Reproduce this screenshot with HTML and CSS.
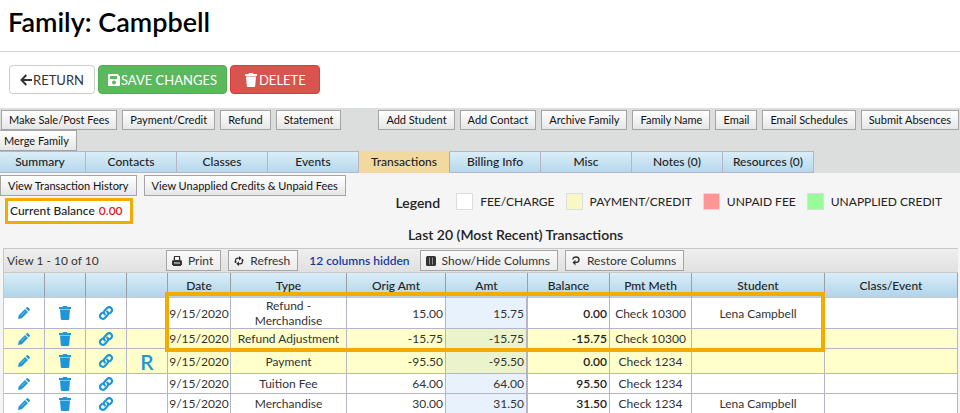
FILE: index.html
```
<!DOCTYPE html>
<html lang="en">
<head>
    <meta charset="UTF-8">
    <meta name="viewport" content="width=device-width, initial-scale=1.0">
    <title>Family: Campbell</title>
    <link rel="stylesheet" href="styles.css">
</head>
<body>
    <!-- Icon definitions -->
    <svg class="icon-defs" aria-hidden="true">
        <symbol id="arrow" viewBox="0 0 12 12"><path d="M6.3 1 1.5 6l4.8 5M1.7 6H12" fill="none" stroke="currentColor" stroke-width="2"/></symbol>
        <symbol id="save" viewBox="0 0 12 12"><path fill-rule="evenodd" d="M1 0h8.500L12 2.500V11q0 1-1 1H1q-1 0-1-1V1q0-1 1-1zM2 2v3h7V2zM6 6.500a2 2 0 1 0 .01 0z" fill="currentColor"/></symbol>
        <symbol id="trash" viewBox="0 0 12 14"><path d="M0 1h3.500L4.200 0h3.600l.7 1H12v2H0zM1 3.500h10l-.8 9.500q-.1 1-1.100 1H2.900q-1 0-1.100-1z" fill="currentColor"/></symbol>
        <symbol id="pencil" viewBox="0 0 12 12"><path d="M0 12l.8-3.800L7 2l3 3-6.200 6.200zM7.700 1.300 8.600.4q.8-.7 1.600 0l1.400 1.400q.7.8 0 1.600l-.9.900z" fill="currentColor"/><path d="M3 8.500 7.300 4.200" stroke="#fff" stroke-width=".6" opacity=".7"/></symbol>
        <symbol id="link" viewBox="0 0 14 14"><g fill="none" stroke="currentColor" stroke-width="2.200" stroke-linecap="round"><path d="M5.800 8.400A2.800 2.800 0 0 1 5.800 4.500L8.200 2A2.700 2.700 0 0 1 12.200 5.900L10.800 7.300"/><path d="M8.200 5.600A2.800 2.800 0 0 1 8.200 9.500L5.800 12A2.700 2.700 0 0 1 1.800 8.100L3.200 6.700"/></g></symbol>
        <symbol id="print" viewBox="0 0 10 10"><path fill-rule="evenodd" d="M2 0h6l.5 4.500H10V9H9v1H1V9H0V4.500h1.500zM3 1v3h4V1zM2 6.500v1h6v-1z" fill="currentColor"/></symbol>
        <symbol id="refresh" viewBox="0 0 10 10"><g fill="none" stroke="currentColor" stroke-width="1.200"><path d="M1.500 6.500V4.500Q1.500 2.200 4 2.200h2M8.500 3.500v2Q8.500 7.800 6 7.800H4"/></g><path d="M5 0 7.800 2.200 5 4.400zM5 5.600 2.200 7.800 5 10zM0 5.500h3L1.500 7.300zM7 4.500h3L8.500 2.700z" fill="currentColor"/></symbol>
        <symbol id="columns" viewBox="0 0 10 10"><path fill-rule="evenodd" d="M1.500 0h7Q10 0 10 1.500v7Q10 10 8.500 10h-7Q0 10 0 8.500v-7Q0 0 1.500 0zM3 1.500v7h.5v-7zM6.500 1.500v7H7v-7z" fill="currentColor"/></symbol>
        <symbol id="restore" viewBox="0 0 10 10"><path d="M2 3.500Q2 1 5 1t3 2.700Q8 6.400 5 6.400H2.500" fill="none" stroke="currentColor" stroke-width="1.400"/><path d="M4.500 3.800 1.500 6.500l3 3z" fill="currentColor"/></symbol>
    </svg>

    <header class="page-header">
        <h1>Family: Campbell</h1>
    </header>

    <div class="main-actions">
        <button class="btn btn-return"><svg class="icon-12"><use href="#arrow"/></svg>RETURN</button>
        <button class="btn btn-save"><svg class="icon-12"><use href="#save"/></svg>SAVE CHANGES</button>
        <button class="btn btn-delete"><svg class="icon-14"><use href="#trash"/></svg>DELETE</button>
    </div>

    <div class="top-panel">
        <div class="tool-row">
            <button class="tool">Make Sale/Post Fees</button>
            <button class="tool">Payment/Credit</button>
            <button class="tool">Refund</button>
            <button class="tool">Statement</button>
            <button class="tool push-right">Add Student</button>
            <button class="tool">Add Contact</button>
            <button class="tool">Archive Family</button>
            <button class="tool">Family Name</button>
            <button class="tool">Email</button>
            <button class="tool">Email Schedules</button>
            <button class="tool">Submit Absences</button>
        </div>
        <div class="tool-row merge-row">
            <button class="tool">Merge Family</button>
        </div>
        <nav class="tabs">
            <a href="#">Summary</a>
            <a href="#">Contacts</a>
            <a href="#">Classes</a>
            <a href="#">Events</a>
            <a href="#" class="active">Transactions</a>
            <a href="#">Billing Info</a>
            <a href="#">Misc</a>
            <a href="#">Notes (0)</a>
            <a href="#">Resources (0)</a>
        </nav>
    </div>

    <main class="content">
        <div class="view-row">
            <button class="tool">View Transaction History</button>
            <button class="tool">View Unapplied Credits &amp; Unpaid Fees</button>
        </div>

        <div class="info-row">
            <div class="balance">Current Balance <span>0.00</span></div>
            <div class="legend">
                <strong>Legend</strong>
                <span class="legend-item"><i class="swatch fee"></i>FEE/CHARGE</span>
                <span class="legend-item"><i class="swatch payment"></i>PAYMENT/CREDIT</span>
                <span class="legend-item"><i class="swatch unpaid"></i>UNPAID FEE</span>
                <span class="legend-item"><i class="swatch unapplied"></i>UNAPPLIED CREDIT</span>
            </div>
        </div>

        <h2>Last 20 (Most Recent) Transactions</h2>

        <div class="grid">
            <div class="grid-bar">
                <span class="view-count">View 1 - 10 of 10</span>
                <button class="grid-btn"><svg><use href="#print"/></svg>Print</button>
                <button class="grid-btn"><svg><use href="#refresh"/></svg>Refresh</button>
                <span class="hidden-note">12 columns hidden</span>
                <button class="grid-btn"><svg><use href="#columns"/></svg>Show/Hide Columns</button>
                <button class="grid-btn"><svg><use href="#restore"/></svg>Restore Columns</button>
            </div>
            <div class="table-wrap">
                <table>
                    <colgroup>
                        <col class="c-icon"><col class="c-icon"><col class="c-icon"><col class="c-icon">
                        <col class="c-date"><col class="c-type"><col class="c-orig"><col class="c-amt">
                        <col class="c-amt"><col class="c-amt"><col class="c-name"><col class="c-name">
                    </colgroup>
                    <thead>
                        <tr>
                            <th></th><th></th><th></th><th></th>
                            <th>Date</th><th>Type</th><th>Orig Amt</th><th>Amt</th>
                            <th>Balance</th><th>Pmt Meth</th><th>Student</th><th>Class/Event</th>
                        </tr>
                    </thead>
                    <tbody>
                        <tr class="tall">
                            <td><button class="act" aria-label="Edit"><svg class="icon-12"><use href="#pencil"/></svg></button></td>
                            <td><button class="act" aria-label="Delete"><svg class="icon-14"><use href="#trash"/></svg></button></td>
                            <td><button class="act" aria-label="Link"><svg class="icon-14"><use href="#link"/></svg></button></td>
                            <td></td>
                            <td>9/15/2020</td><td>Refund -<br>Merchandise</td><td class="num">15.00</td><td class="num amt">15.75</td>
                            <td class="num bal">0.00</td><td>Check 10300</td><td>Lena Campbell</td><td></td>
                        </tr>
                        <tr class="credit">
                            <td><button class="act" aria-label="Edit"><svg class="icon-12"><use href="#pencil"/></svg></button></td>
                            <td><button class="act" aria-label="Delete"><svg class="icon-14"><use href="#trash"/></svg></button></td>
                            <td><button class="act" aria-label="Link"><svg class="icon-14"><use href="#link"/></svg></button></td>
                            <td></td>
                            <td>9/15/2020</td><td>Refund Adjustment</td><td class="num">-15.75</td><td class="num amt">-15.75</td>
                            <td class="num bal">-15.75</td><td>Check 10300</td><td></td><td></td>
                        </tr>
                        <tr class="credit medium">
                            <td><button class="act" aria-label="Edit"><svg class="icon-12"><use href="#pencil"/></svg></button></td>
                            <td><button class="act" aria-label="Delete"><svg class="icon-14"><use href="#trash"/></svg></button></td>
                            <td><button class="act" aria-label="Link"><svg class="icon-14"><use href="#link"/></svg></button></td>
                            <td class="receipt">R</td>
                            <td>9/15/2020</td><td>Payment</td><td class="num">-95.50</td><td class="num amt">-95.50</td>
                            <td class="num bal">0.00</td><td>Check 1234</td><td></td><td></td>
                        </tr>
                        <tr>
                            <td><button class="act" aria-label="Edit"><svg class="icon-12"><use href="#pencil"/></svg></button></td>
                            <td><button class="act" aria-label="Delete"><svg class="icon-14"><use href="#trash"/></svg></button></td>
                            <td><button class="act" aria-label="Link"><svg class="icon-14"><use href="#link"/></svg></button></td>
                            <td></td>
                            <td>9/15/2020</td><td>Tuition Fee</td><td class="num">64.00</td><td class="num amt">64.00</td>
                            <td class="num bal">95.50</td><td>Check 1234</td><td></td><td></td>
                        </tr>
                        <tr>
                            <td><button class="act" aria-label="Edit"><svg class="icon-12"><use href="#pencil"/></svg></button></td>
                            <td><button class="act" aria-label="Delete"><svg class="icon-14"><use href="#trash"/></svg></button></td>
                            <td><button class="act" aria-label="Link"><svg class="icon-14"><use href="#link"/></svg></button></td>
                            <td></td>
                            <td>9/15/2020</td><td>Merchandise</td><td class="num">30.00</td><td class="num amt">31.50</td>
                            <td class="num bal">31.50</td><td>Check 1234</td><td>Lena Campbell</td><td></td>
                        </tr>
                    </tbody>
                </table>
                <div class="highlight"></div>
            </div>
        </div>
    </main>
</body>
</html>
```

FILE: styles.css
```
* {
    box-sizing: border-box;
}

body {
    margin: 0;
    font-family: Lato, "Liberation Sans", sans-serif;
    font-size: 12px;
    color: #222;
    background: #fff;
    overflow: hidden;
}

button {
    font-family: inherit;
    cursor: pointer;
}

.icon-defs {
    display: none;
}

.icon-12 {
    width: 12px;
    height: 12px;
}

.icon-14 {
    width: 14px;
    height: 14px;
}

/* Header */
.page-header {
    padding: 5px 8px 12px;
    border-bottom: 1px solid #d4d4d4;
}

h1 {
    margin: 0;
    font-size: 27px;
    line-height: 34px;
    font-weight: 600;
    color: #000;
}

.main-actions {
    display: flex;
    gap: 3px;
    padding: 13px 9px 14px;
}

.btn {
    display: flex;
    align-items: center;
    height: 29px;
    padding: 0 10px;
    font-size: 13px;
    color: #fff;
    border: 1px solid;
    border-radius: 4px;
}

.btn svg {
    margin-right: 1px;
}

.btn-return {
    color: #333;
    background: #fff;
    border-color: #ccc;
}

.btn-save {
    padding: 0 9px;
    background: #5cb85c;
    border-color: #4cae4c;
}

.btn-delete {
    padding: 0 13px;
    background: #d9534f;
    border-color: #d43f3a;
}

/* Toolbar and tabs */
.top-panel {
    background: #dcdedd;
}

.tool-row {
    display: flex;
    gap: 5px;
    padding: 2px 1px 0;
}

.tool {
    height: 20px;
    padding: 0 7px;
    font-size: 11px;
    line-height: 16px;
    color: #111;
    white-space: nowrap;
    background: linear-gradient(#fff, #e6e6e6);
    border: 1px solid #a5a5a5;
}

.push-right {
    margin-left: auto;
}

.merge-row {
    padding: 0;
    margin-left: -4px;
}

.merge-row .tool,
.view-row .tool {
    height: 21px;
}

.tabs {
    display: flex;
    margin-left: -5px;
}

.tabs a {
    width: 91px;
    height: 22px;
    font-size: 12px;
    font-weight: 500;
    line-height: 20px;
    text-align: center;
    color: #222;
    text-decoration: none;
    background: linear-gradient(#daeef8, #b6d8ed);
    border: 1px solid #b5b5c6;
    border-left: 0;
}

.tabs .active {
    background: #f1d9a0;
    border-color: #f1d9a0 #b5ae79;
}

/* Content */
.content {
    padding-top: 2px;
    background: #f5f5f5;
}

.view-row {
    display: flex;
    gap: 7px;
}

.info-row {
    display: flex;
    justify-content: space-between;
    align-items: flex-start;
    padding: 0 18px 0 5px;
}

.balance {
    margin-top: 2px;
    padding: 0 7px 0 2px;
    font-size: 12px;
    font-weight: 500;
    line-height: 20px;
    background: #fff;
    border: 3px solid #f2ab00;
}

.balance span {
    margin-left: 1px;
    color: #d8212f;
    font-weight: 600;
}

.legend {
    display: flex;
    align-items: center;
    gap: 11px;
    margin-top: -4px;
    font-size: 12px;
}

.legend strong {
    padding-top: 2px;
    margin-right: 5px;
    font-size: 14px;
    font-weight: 600;
}

.legend-item {
    display: flex;
    align-items: center;
    gap: 7px;
}

.swatch {
    width: 17px;
    height: 17px;
    border: 1px solid #ddd;
}

.fee {
    background: #fff;
}

.payment {
    background: #f8f8c4;
}

.unpaid {
    background: #ff9696;
}

.unapplied {
    background: #98fc98;
}

h2 {
    margin: 0;
    padding: 2px 0 4px 71px;
    font-size: 14px;
    font-weight: 600;
    line-height: 18px;
    text-align: center;
}

/* Transaction grid */
.grid {
    margin: 0 2px 0 3px;
    border: 1px solid #c8c8c8;
    border-width: 1px 0 0 1px;
}

.grid-bar {
    display: flex;
    align-items: center;
    height: 24px;
    color: #333;
    background: linear-gradient(#efefef, #e0e0e0);
    border-bottom: 1px solid #c8c8c8;
}

.view-count {
    width: 162px;
    padding-left: 3px;
}

.grid-btn {
    display: flex;
    align-items: center;
    height: 21px;
    margin-right: 7px;
    padding: 0 7px 0 5px;
    font-size: 12px;
    color: #333;
    background: linear-gradient(#fafafa, #ececec);
    border: 1px solid #a5a5a5;
}

.grid-btn svg {
    width: 10px;
    height: 10px;
    margin-right: 6px;
}

.hidden-note {
    margin: 0 10px 0 4px;
    font-weight: 600;
    color: #143c9c;
}

.table-wrap {
    position: relative;
}

table {
    width: 100%;
    table-layout: fixed;
    border-collapse: separate;
    border-spacing: 0;
    font-size: 12px;
    background: #fff;
}

.c-icon {
    width: 41px;
}

.c-date {
    width: 63px;
}

.c-type {
    width: 116px;
}

.c-orig {
    width: 99px;
}

.c-amt {
    width: 82px;
}

.c-name {
    width: 133px;
}

th {
    height: 25px;
    padding: 1px 0 0;
    font-weight: 500;
    background: linear-gradient(#daeef8, #b0d4ea);
    border-right: 1px solid #999da5;
    border-bottom: 1px solid #c8c8c8;
}

td {
    height: 20px;
    padding: 0;
    line-height: 15px;
    text-align: center;
    white-space: nowrap;
    color: #333;
    border-right: 1px solid #b5b5c6;
    border-bottom: 1px solid #b5b5c6;
}

.tall td {
    height: 31px;
}

.medium td {
    height: 25px;
}

.credit {
    background: #ffffcc;
}

.num {
    padding-right: 2px;
    text-align: right;
}

.amt {
    background: #e8f2fd;
    border-right-width: 2px;
}

.credit .amt {
    background: #ebf3cd;
}

.bal {
    font-weight: 600;
    color: #222;
}

.receipt {
    font-size: 21px;
    font-weight: 600;
    color: #1e96d8;
}

.act {
    display: block;
    margin: 0 auto;
    padding: 0;
    color: #1e96d8;
    background: none;
    border: 0;
}

.act svg {
    display: block;
}

/* Frame round the refund rows */
.highlight {
    position: absolute;
    top: 19px;
    left: 161px;
    right: 133px;
    height: 60px;
    border: 4px solid #f2ab00;
    pointer-events: none;
}
```
